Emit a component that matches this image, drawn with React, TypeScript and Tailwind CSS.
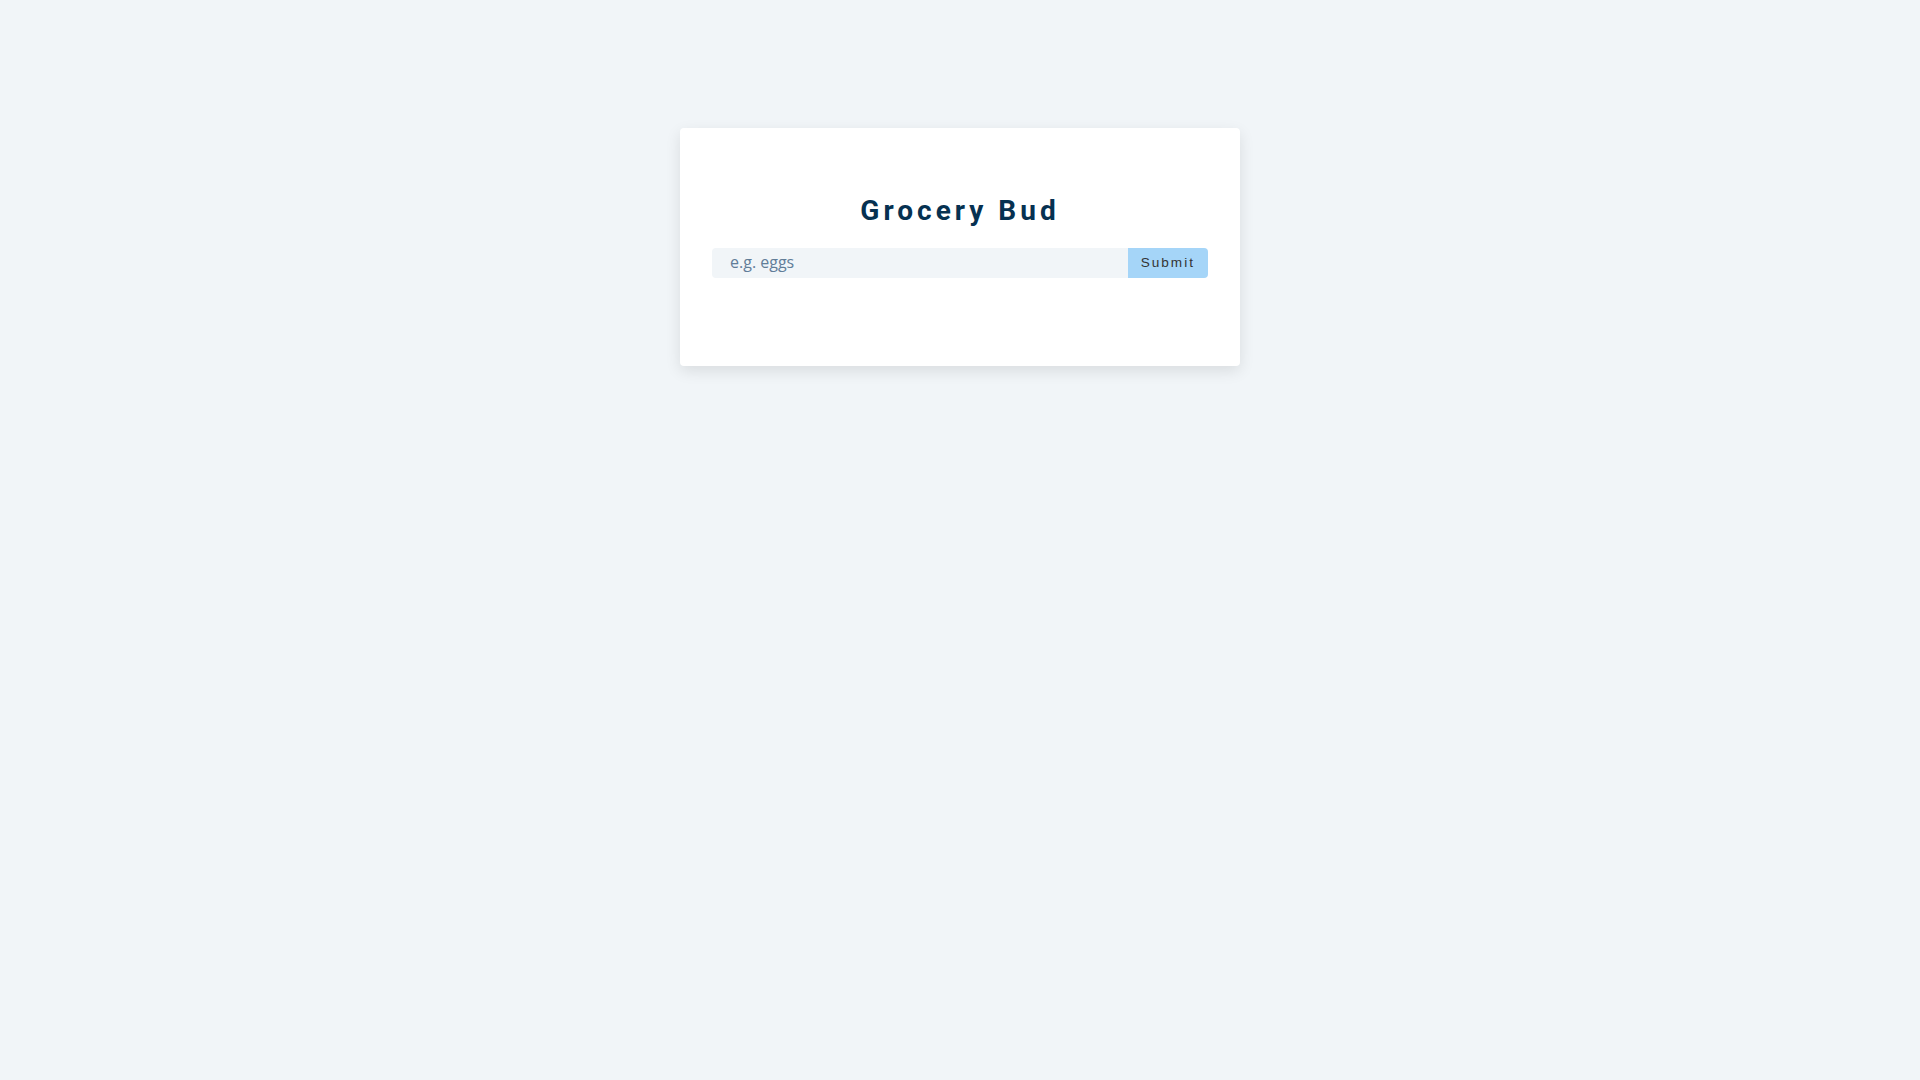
export default function App() {
  return (
    <div className="min-h-screen bg-[#f1f5f8] pt-32" style={{ fontFamily: '"Open Sans", sans-serif' }}>
      <section className="mx-auto w-[90vw] max-w-[560px] rounded bg-white px-8 pt-[65px] pb-[88px] shadow-[0_5px_15px_rgba(0,0,0,0.1)]">
        <form onSubmit={(e) => e.preventDefault()}>
          <h3 className="mb-5 text-center text-[28px] leading-[35px] font-bold tracking-[4px] text-[#063151] [font-family:Roboto,sans-serif]">
            Grocery Bud
          </h3>
          <div className="flex h-[30px]">
            <input
              type="text"
              placeholder="e.g. eggs"
              className="min-w-0 flex-1 rounded-l bg-[#f1f5f8] pt-0 pb-[2px] pr-1 pl-[18px] text-base text-[#617d98] outline-none placeholder:text-[#617d98] [font-family:'Open_Sans',sans-serif]"
            />
            <button
              type="submit"
              className="rounded-r bg-[#a5d5f8] px-[13px] text-[13.6px] tracking-[2px] text-[#333] [font-family:'Liberation_Sans',Arial,sans-serif]"
            >
              Submit
            </button>
          </div>
        </form>
      </section>
    </div>
  )
}
